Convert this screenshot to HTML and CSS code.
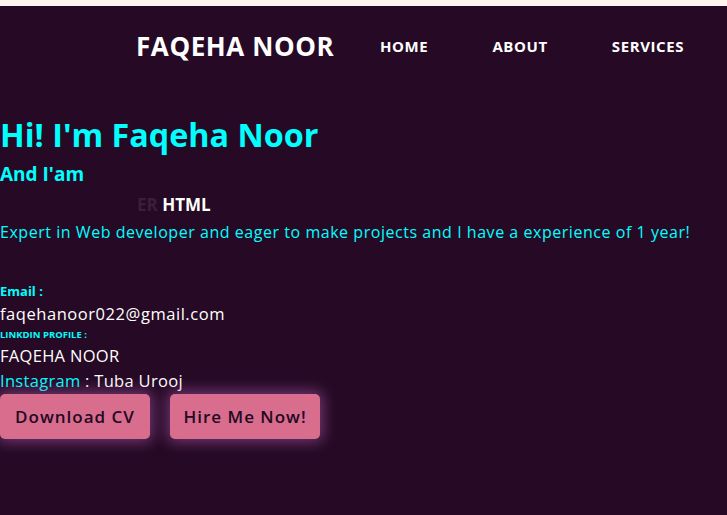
FILE: index.html
```html
<!DOCTYPE html>
<html>
<head>
<meta charset="utf-8">
<link rel="stylesheet" href="styles.css">
</head>
<body>
<div class="topbar"></div>
<div class="page">
  <header class="header">
    <div class="logo">FAQEHA NOOR</div>
    <nav class="nav">
      <a class="nav-link">HOME</a>
      <a class="nav-link">ABOUT</a>
      <a class="nav-link">SERVICES</a>
    </nav>
  </header>
  <section class="hero">
    <h1 class="title">Hi! I'm Faqeha Noor</h1>
    <h3 class="subtitle">And I'am</h3>
    <div class="typing"><span class="faded">ER</span> <span class="typed">HTML</span></div>
    <p class="intro">Expert in Web developer and eager to make projects and I have a experience of 1 year!</p>
    <div class="contact">
      <div class="label">Email :</div>
      <div class="value email">faqehanoor022@gmail.com</div>
      <div class="label small">LINKDIN PROFILE :</div>
      <div class="value">FAQEHA NOOR</div>
      <div class="value"><span class="cyan">Instagram</span> : Tuba Urooj</div>
    </div>
    <div class="buttons">
      <a class="btn">Download CV</a>
      <a class="btn">Hire Me Now!</a>
    </div>
  </section>
</div>
</body>
</html>
```
FILE: styles.css
```css
html, body {
  margin: 0;
  padding: 0;
}
body {
  background: #260a25;
  font-family: "Open Sans", "DejaVu Sans", sans-serif;
  color: #ffffff;
  height: 515px;
  overflow: hidden;
}
.topbar {
  height: 6px;
  background: #fff5ee;
}
.header {
  display: flex;
  align-items: center;
  height: 80px;
  padding-left: 136px;
}
.logo {
  font-size: 26px;
  font-weight: 700;
  letter-spacing: 0.6px;
  width: 244px;
}
.nav {
  display: flex;
  gap: 64px;
}
.nav-link {
  font-size: 15px;
  font-weight: 700;
  letter-spacing: 0.6px;
  color: #fff;
}
.hero {
  padding-top: 26px;
}
.title {
  margin: 0;
  font-size: 32.3px;
  font-weight: 700;
  color: #00ffff;
  line-height: 44px;
}
.subtitle {
  margin: 0;
  padding-top: 3px;
  font-size: 19px;
  font-weight: 700;
  color: #00ffff;
  line-height: 30px;
}
.typing {
  padding-left: 137px;
  margin-top: 1px;
  font-size: 17px;
  font-weight: 700;
  line-height: 30px;
}
.faded {
  color: #3a1f38;
}
.intro {
  margin: 0;
  font-size: 16px;
  letter-spacing: 0.54px;
  color: #00ffff;
  line-height: 24px;
}
.contact {
  padding-top: 38px;
}
.label {
  color: #00ffff;
  font-weight: 700;
  font-size: 13px;
  line-height: 18px;
}
.label.small {
  margin-top: 1px;
  font-size: 9.5px;
  line-height: 16px;
}
.value {
  font-size: 16.5px;
  letter-spacing: 0.3px;
  line-height: 25px;
}
.value.email {
  padding-top: 1px;
  letter-spacing: 0.55px;
}
.cyan {
  color: #00ffff;
}
.buttons {
  display: flex;
  gap: 20px;
  padding-top: 1px;
}
.btn {
  width: 150px;
  height: 45px;
  box-sizing: border-box;
  display: flex;
  align-items: center;
  justify-content: center;
  background: #d96d8e;
  border-radius: 5px;
  color: #230922;
  font-size: 17px;
  font-weight: 600;
  letter-spacing: 1px;
  box-shadow: 0 0 14px 3px rgba(190, 100, 190, 0.5);
}
```
